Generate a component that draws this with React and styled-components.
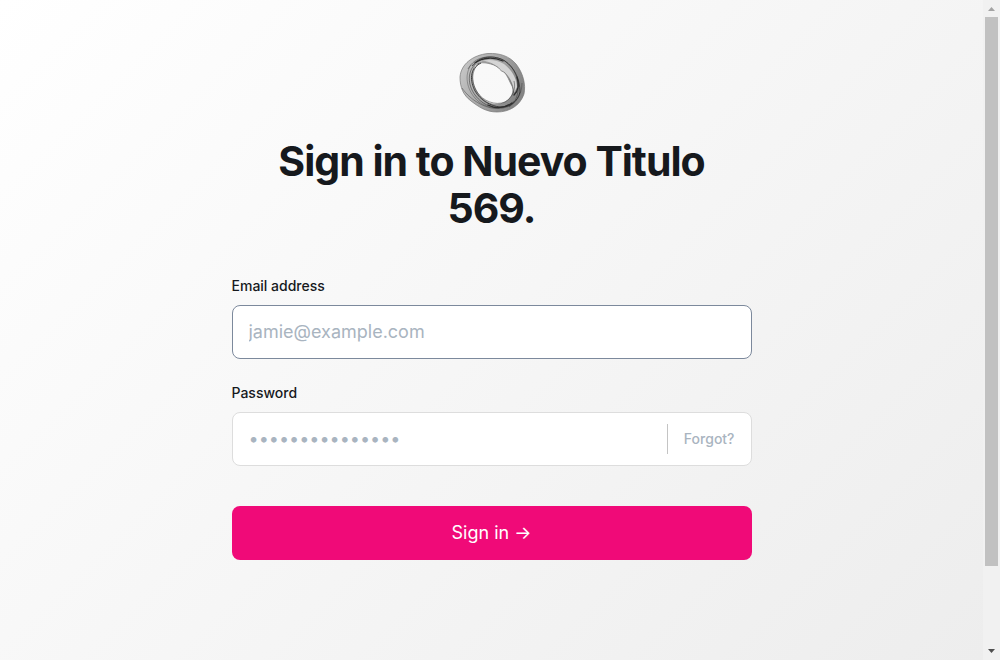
import React from "react";
import styled, { createGlobalStyle } from "styled-components";

const GlobalStyle = createGlobalStyle`
  *, *::before, *::after { box-sizing: border-box; }
  body {
    margin: 0;
    font-family: Inter, "Liberation Sans", sans-serif;
    color: #16191d;
  }
`;

const Shell = styled.div`
  display: flex;
  height: 100vh;
  overflow: hidden;
`;

const Page = styled.main`
  flex: 1;
  min-width: 0;
  min-height: 752px;
  align-self: flex-start;
  display: flex;
  flex-direction: column;
  align-items: center;
  padding: 50px 24px;
  background: linear-gradient(135deg, #ffffff 0%, #ececec 100%);
`;

const Logo = styled.svg`
  display: block;
  width: 70px;
  height: 64px;
`;

const Title = styled.h1`
  width: 100%;
  max-width: 520px;
  margin: 24px 0 44px;
  font-size: 41px;
  line-height: 47px;
  font-weight: 700;
  letter-spacing: -1px;
  text-align: center;
`;

const Form = styled.form`
  display: flex;
  flex-direction: column;
  width: 100%;
  max-width: 520px;
`;

const Field = styled.div`
  display: flex;
  flex-direction: column;
  gap: 9px;
  margin-bottom: 24px;
`;

const Label = styled.label`
  font-size: 14px;
  line-height: 20px;
  font-weight: 500;
`;

const InputBox = styled.div`
  display: flex;
  align-items: center;
  height: 54px;
  padding: 0 16px;
  background: #ffffff;
  border: 1px solid ${(p) => (p.$active ? "#7c899c" : "#dddddd")};
  border-radius: 8px;
`;

const Input = styled.input`
  flex: 1;
  min-width: 0;
  height: 100%;
  padding: 0 0 2px;
  border: 0;
  outline: 0;
  background: transparent;
  font: 400 18px "Inter", sans-serif;
  color: #16191d;
  &::placeholder { color: #a9b4c0; opacity: 1; }
`;

const Forgot = styled.a`
  padding-left: 16px;
  border-left: 1px solid #c4c4c4;
  font-size: 14px;
  line-height: 30px;
  font-weight: 500;
  color: #a9b4c0;
  text-decoration: none;
`;

const Submit = styled.button`
  height: 54px;
  margin-top: 16px;
  padding-bottom: 2px;
  border: 0;
  border-radius: 8px;
  background: #f00a78;
  color: #ffffff;
  font: 400 18px "Inter", sans-serif;
  cursor: pointer;
`;

const Scrollbar = styled.div`
  display: flex;
  flex-direction: column;
  align-items: center;
  justify-content: space-between;
  width: 17px;
  background: #f1f1f1;
`;

const Thumb = styled.div`
  flex: 1;
  width: 13px;
  margin-bottom: 77px;
  background: #c1c1c1;
`;

const Arrow = styled.svg`
  display: block;
  width: 17px;
  height: 17px;
  fill: ${(p) => p.$color};
`;

function RingLogo() {
  return (
    <Logo viewBox="0 0 70 64" aria-label="Logo" role="img">
      <defs>
        <linearGradient id="ring" x1="0" y1="0" x2="1" y2="0.4">
          <stop offset="0" stopColor="#cccccc" />
          <stop offset="0.5" stopColor="#aaaaaa" />
          <stop offset="1" stopColor="#858585" />
        </linearGradient>
      </defs>
      <path
        fill="url(#ring)"
        fillRule="evenodd"
        stroke="#777777"
        strokeWidth="0.7"
        d="M31 3.500C43 3 52 6 59 14C66 23 69 34 67 44C63 56 52 62 40 62C29 62 22 57 14 51C6 45 3 37 3 27C4 14 16 5 31 3.500Z M18 15C14 22 15 31 18 38C22 46 26 50 32 53C39 56 48 54 53 48C57 43 56 38 55 36C52 31 51 26 47 22C43 21 42 17 39 16C33 13 23 11 18 15Z"
      />
      <path fill="#d4d4d4" d="M25 11C32 9 40 10 47 14C55 20 60 29 60 37L57 43C56 32 51 26 47 22C43 21 42 17 39 16C34 13 29 12 25 11Z" />
      <g fill="none" stroke="#333333">
        <path strokeWidth="0.9" opacity="0.9" d="M15 16C23 5 38 5 48 11C58 18 63 30 63 42" />
        <path strokeWidth="0.7" opacity="0.7" d="M11 19C18 6 33 5 44 9C55 14 60 24 61 34C62 44 59 52 52 57" />
        <path strokeWidth="0.9" d="M24 13C12 19 13 31 18 41C24 51 34 56 43 57C53 58 61 51 63 42" />
        <path strokeWidth="0.7" opacity="0.8" d="M18 14C9 24 12 37 18 45C26 56 40 61 51 55" />
        <path strokeWidth="0.6" opacity="0.6" d="M14 15C7 25 10 39 18 48C28 60 47 61 57 51" />
        <path strokeWidth="0.7" opacity="0.7" d="M22 13C13 22 15 34 20 42C26 51 38 56 48 52C56 47 59 39 57 31" />
        <path strokeWidth="0.5" opacity="0.6" d="M25 11C32 12 36 14 39 16C42 17 43 21 47 22C52 26 56 34 57 43" />
        <path strokeWidth="0.6" opacity="0.7" d="M5 38C14 51 31 61 46 58C59 56 65 44 65 33" />
      </g>
      <g fill="none" stroke="#2d2d2d" strokeWidth="1.300" strokeLinecap="round">
        <path d="M18 13C26 7 37 7 46 11" />
        <path d="M31 55C39 59 48 58 55 53" />
        <path d="M57 45C62 40 62 33 60 27" />
      </g>
    </Logo>
  );
}

export default function App() {
  return (
    <>
      <GlobalStyle />
      <Shell>
        <Page>
          <RingLogo />
          <Title>Sign in to Nuevo Titulo 569.</Title>
          <Form onSubmit={(e) => e.preventDefault()}>
            <Field>
              <Label htmlFor="email">Email address</Label>
              <InputBox $active>
                <Input id="email" type="email" placeholder="jamie@example.com" />
              </InputBox>
            </Field>
            <Field>
              <Label htmlFor="password">Password</Label>
              <InputBox>
                <Input id="password" type="password" placeholder="•••••••••••••••" />
                <Forgot href="#forgot">Forgot?</Forgot>
              </InputBox>
            </Field>
            <Submit type="submit">Sign in →</Submit>
          </Form>
        </Page>
        <Scrollbar aria-hidden="true">
          <Arrow $color="#a3a3a3" viewBox="0 0 17 17"><path d="M5 11L8.500 7L12 11Z" /></Arrow>
          <Thumb />
          <Arrow $color="#505050" viewBox="0 0 17 17"><path d="M5 6L8.500 10L12 6Z" /></Arrow>
        </Scrollbar>
      </Shell>
    </>
  );
}
